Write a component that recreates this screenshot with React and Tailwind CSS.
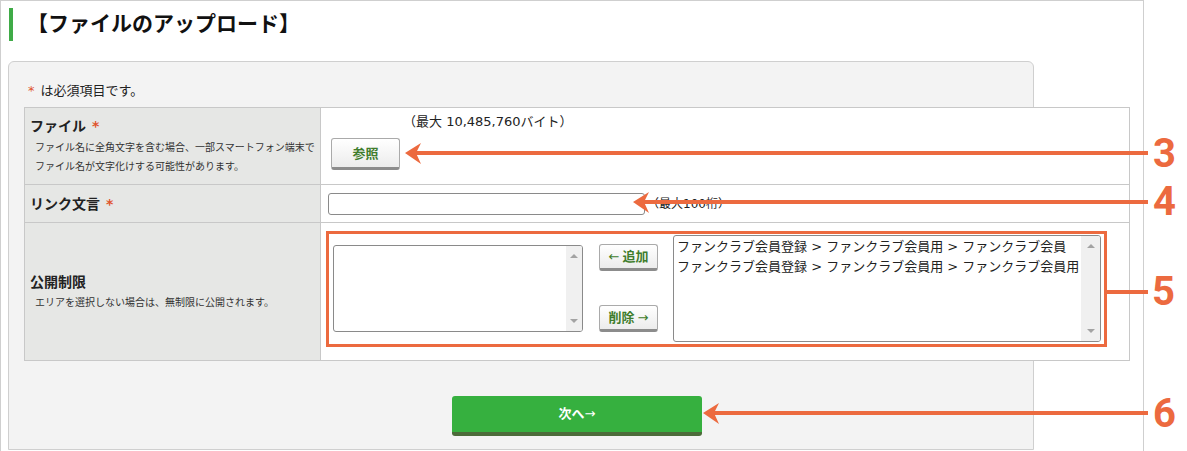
import React from "react";

const ORANGE = "#ec6a3f";

function SmallButton({ children, className = "" }) {
  return (
    <button
      type="button"
      className={
        "flex items-center justify-center rounded-[3px] border border-[#aaa] border-b-[3px] border-b-[#8c8c8c] bg-gradient-to-b from-white to-[#ececec] text-[13px] font-bold text-[#3f7d2c] leading-none " +
        className
      }
    >
      {children}
    </button>
  );
}

function ListBox({ lines = [], className = "", barW = "w-[16px]" }) {
  return (
    <div className={"flex overflow-hidden rounded-[3px] border border-[#8a8a8a] bg-white " + className}>
      <div className="flex-1 pl-[3px] pt-[1px] text-[13px] leading-[20px] text-[#222] whitespace-nowrap">
        {lines.map((l) => (
          <div key={l}>{l}</div>
        ))}
      </div>
      <div className={"flex flex-col items-center justify-between bg-[#f0f0f0] py-[8px] " + barW}>
        <span className="h-0 w-0 border-x-[4px] border-b-[4px] border-x-transparent border-b-[#a3a3a3]" />
        <span className="h-0 w-0 border-x-[4px] border-t-[4px] border-x-transparent border-t-[#a3a3a3]" />
      </div>
    </div>
  );
}

function Req() {
  return <span className="ml-[6px] text-[#e0552d]">*</span>;
}

export default function App() {
  const selected = [
    "ファンクラブ会員登録 > ファンクラブ会員用 > ファンクラブ会員",
    "ファンクラブ会員登録 > ファンクラブ会員用 > ファンクラブ会員用",
  ];

  return (
    <div className="relative h-[451px] w-[1187px] overflow-hidden bg-white font-['DejaVu_Sans','Noto_Sans_CJK_JP',sans-serif] text-[#222]">
      <div className="h-[451px] w-[1144px] border border-b-0 border-[#cfcfcf]">
        {/* title */}
        <div className="ml-[8px] mt-[7px] flex h-[33px] items-center">
          <div className="h-full w-[4px] bg-[#3fab47]" />
          <h1 className="ml-[14px] text-[21px] font-bold leading-[33px] text-[#111]">【ファイルのアップロード】</h1>
        </div>

        {/* panel */}
        <div className="ml-[7px] mt-[20px] h-[389px] w-[1026px] rounded-t-[6px] border border-[#cfcfcf] bg-[#f3f3f3] pl-[15px] pt-[20px]">
          <div className="mb-[7px] ml-[4px] text-[13px] leading-[18px]">
            <span className="mr-[6px] text-[#e0552d]">*</span>は必須項目です。
          </div>

          <div className="w-[1106px] border-x border-t border-[#c8c8c8]">
            {/* row 1 */}
            <div className="flex h-[77px] border-b border-[#c8c8c8]">
              <div className="w-[296px] border-r border-[#c8c8c8] bg-[#e6e7e5] pl-[5px] pt-[8px]">
                <div className="text-[14px] font-bold leading-[20px]">
                  ファイル<Req />
                </div>
                <div className="mt-[2px] pl-[5px] text-[10px] leading-[19px] text-[#333]">
                  <div>ファイル名に全角文字を含む場合、一部スマートフォン端末で</div>
                  <div>ファイル名が文字化けする可能性があります。</div>
                </div>
              </div>
              <div className="flex-1 bg-white pl-[10px] pt-[5px]">
                <div className="ml-[72px] text-[13px] leading-[18px]">（最大 10,485,760バイト）</div>
                <SmallButton className="mt-[7px] h-[32px] w-[69px]">参照</SmallButton>
              </div>
            </div>

            {/* row 2 */}
            <div className="flex h-[38px] border-b border-[#c8c8c8]">
              <div className="flex w-[296px] items-center border-r border-[#c8c8c8] bg-[#e6e7e5] pl-[5px]">
                <div className="text-[14px] font-bold leading-[20px]">
                  リンク文言<Req />
                </div>
              </div>
              <div className="flex flex-1 items-center bg-white pl-[7px]">
                <div className="h-[22px] w-[317px] rounded-[3px] border border-[#8a8a8a] bg-white" />
                <span className="ml-[2px] text-[12px] leading-[18px]">（最大100桁）</span>
              </div>
            </div>

            {/* row 3 */}
            <div className="flex h-[138px] border-b border-[#c8c8c8]">
              <div className="flex w-[296px] flex-col justify-center border-r border-[#c8c8c8] bg-[#e6e7e5] pl-[5px]">
                <div className="text-[14px] font-bold leading-[20px]">公開制限</div>
                <div className="mt-[1px] pl-[5px] text-[10px] leading-[19px] text-[#333]">
                  エリアを選択しない場合は、無制限に公開されます。
                </div>
              </div>
              <div className="flex-1 bg-white pl-[5px] pt-[8px]">
                <div className="flex h-[116px] w-[781px] items-start border-[3px] border-[#ec6a3f]">
                  <ListBox className="ml-[4px] mt-[11px] h-[87px] w-[250px]" />
                  <div className="ml-[16px] mt-[10px] flex flex-col gap-[34px]">
                    <SmallButton className="h-[27px] w-[59px]">
                      <span className="mr-[3px] font-normal">←</span>追加
                    </SmallButton>
                    <SmallButton className="h-[27px] w-[59px]">
                      削除<span className="ml-[3px] font-normal">→</span>
                    </SmallButton>
                  </div>
                  <ListBox lines={selected} barW="w-[19px]" className="ml-[15px] mt-[1px] h-[107px] w-[428px]" />
                </div>
              </div>
            </div>
          </div>

          <div className="mt-[35px] flex w-[1106px] justify-center">
            <button
              type="button"
              className="h-[40px] w-[250px] rounded-[3px] border-b-[4px] border-[#4c6b3a] bg-[#36b03f] text-[13px] font-bold text-white"
            >
              次へ<span className="font-normal">→</span>
            </button>
          </div>
        </div>
      </div>

      {/* annotations */}
      <svg className="pointer-events-none absolute left-0 top-0" width="1187" height="451">
        <g fill={ORANGE} stroke="none">
          <rect x="414" y="151" width="734" height="4" />
          <polygon points="405,153 421,143 416,153 421,164" />
          <rect x="642" y="200" width="506" height="4" />
          <polygon points="633,202 649,192 644,202 649,213" />
          <rect x="1106" y="290" width="42" height="4" />
          <rect x="712" y="411" width="436" height="4" />
          <polygon points="703,413 719,403 714,413 719,424" />
        </g>
      </svg>
      <div className="pointer-events-none absolute left-[1153px] top-[134px] font-['Roboto',sans-serif] text-[40px] font-bold leading-none text-[#ec6a3f]">3</div>
      <div className="pointer-events-none absolute left-[1153px] top-[182px] font-['Roboto',sans-serif] text-[40px] font-bold leading-none text-[#ec6a3f]">4</div>
      <div className="pointer-events-none absolute left-[1152px] top-[272px] font-['Roboto',sans-serif] text-[40px] font-bold leading-none text-[#ec6a3f]">5</div>
      <div className="pointer-events-none absolute left-[1153px] top-[394px] font-['Roboto',sans-serif] text-[40px] font-bold leading-none text-[#ec6a3f]">6</div>
    </div>
  );
}
